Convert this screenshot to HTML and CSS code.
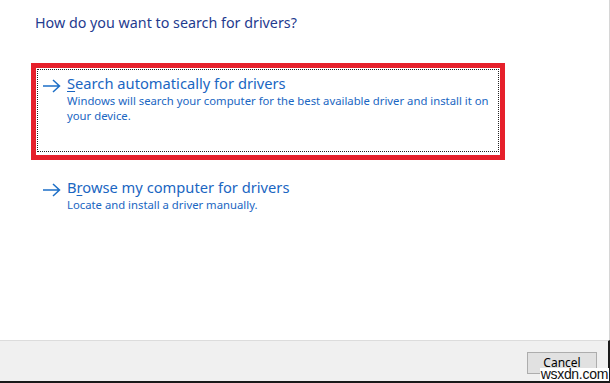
FILE: index.html
```html
<!DOCTYPE html>
<html lang="en">
<head>
<meta charset="utf-8">
<title>Update Drivers</title>
<link rel="stylesheet" href="styles.css">
</head>
<body>
<div class="window">
  <div class="main">
    <h1 class="heading">How do you want to search for drivers?</h1>
    <div class="option selected">
      <div class="focus">
        <svg class="arrow" width="19" height="14" viewBox="0 0 19 14"><path d="M1 7H17.5M11 1L17.5 7L11 13" fill="none" stroke="#1d6fc7" stroke-width="1.5"/></svg>
        <div class="text">
          <div class="title"><u>S</u>earch automatically for drivers</div>
          <div class="desc">Windows will search your computer for the best available driver and install it on your device.</div>
        </div>
      </div>
    </div>
    <div class="option">
      <div class="focus">
        <svg class="arrow" width="19" height="14" viewBox="0 0 19 14"><path d="M1 7H17.5M11 1L17.5 7L11 13" fill="none" stroke="#1d6fc7" stroke-width="1.5"/></svg>
        <div class="text">
          <div class="title">B<u>r</u>owse my computer for drivers</div>
          <div class="desc">Locate and install a driver manually.</div>
        </div>
      </div>
    </div>
  </div>
  <div class="footer">
    <button class="btn">Cancel</button>
  </div>
  <div class="watermark">wsxdn.com</div>
</div>
</body>
</html>
```
FILE: styles.css
```css
html, body {
  margin: 0;
  padding: 0;
  background: #ffffff;
}
.window {
  position: relative;
  width: 610px;
  height: 383px;
  overflow: hidden;
  font-family: "Noto Sans", "Open Sans", sans-serif;
}
.main {
  height: 340px;
  box-sizing: border-box;
  padding-top: 12px;
  border-right: 1px solid #d6d6d6;
}
.heading {
  margin: 0 0 0 35px;
  font-size: 14.3px;
  font-weight: normal;
  line-height: 22px;
  color: #1f3b8f;
}
.option {
  margin-left: 31px;
  width: 474px;
  box-sizing: border-box;
  border: 5px solid transparent;
}
.option.selected {
  margin-top: 29px;
  height: 97px;
  border-color: #e6202b;
}
.option + .option {
  margin-top: 7px;
}
.focus {
  display: flex;
  gap: 6px;
  height: 100%;
  box-sizing: border-box;
  margin: 1px;
  padding: 3px 0 0 4px;
  border: 1px dotted transparent;
}
.selected .focus {
  height: calc(100% - 4px);
  border-color: #222;
}
.arrow {
  flex: none;
  margin-top: 6px;
}
.text {
  flex: 1;
}
.title {
  font-size: 14.7px;
  line-height: 20px;
  color: #1a66c2;
}
.title u {
  text-decoration-thickness: 1px;
  text-underline-offset: 2px;
}
.desc {
  font-size: 11.3px;
  line-height: 15px;
  color: #1a66c2;
  max-width: 430px;
}
.footer {
  height: 43px;
  box-sizing: border-box;
  background: #f0f0f0;
  border-top: 1px solid #dcdcdc;
  border-right: 2px solid #1a1a1a;
  border-bottom: 2px solid #1a1a1a;
  display: flex;
  justify-content: flex-end;
  align-items: flex-start;
  padding: 11px 11px 0 0;
}
.btn {
  width: 70px;
  height: 22px;
  background: #e1e1e1;
  border: 1px solid #adadad;
  font-family: "Noto Sans", "Open Sans", sans-serif;
  font-size: 12px;
  color: #000;
  padding: 0;
  line-height: 18px;
}
.watermark {
  position: absolute;
  right: 1px;
  bottom: 2px;
  background: #ffffff;
  color: #111;
  font-family: "Liberation Sans", Arial, sans-serif;
  font-size: 14px;
  line-height: 13px;
  padding: 0 1px;
  letter-spacing: -0.3px;
}
```
